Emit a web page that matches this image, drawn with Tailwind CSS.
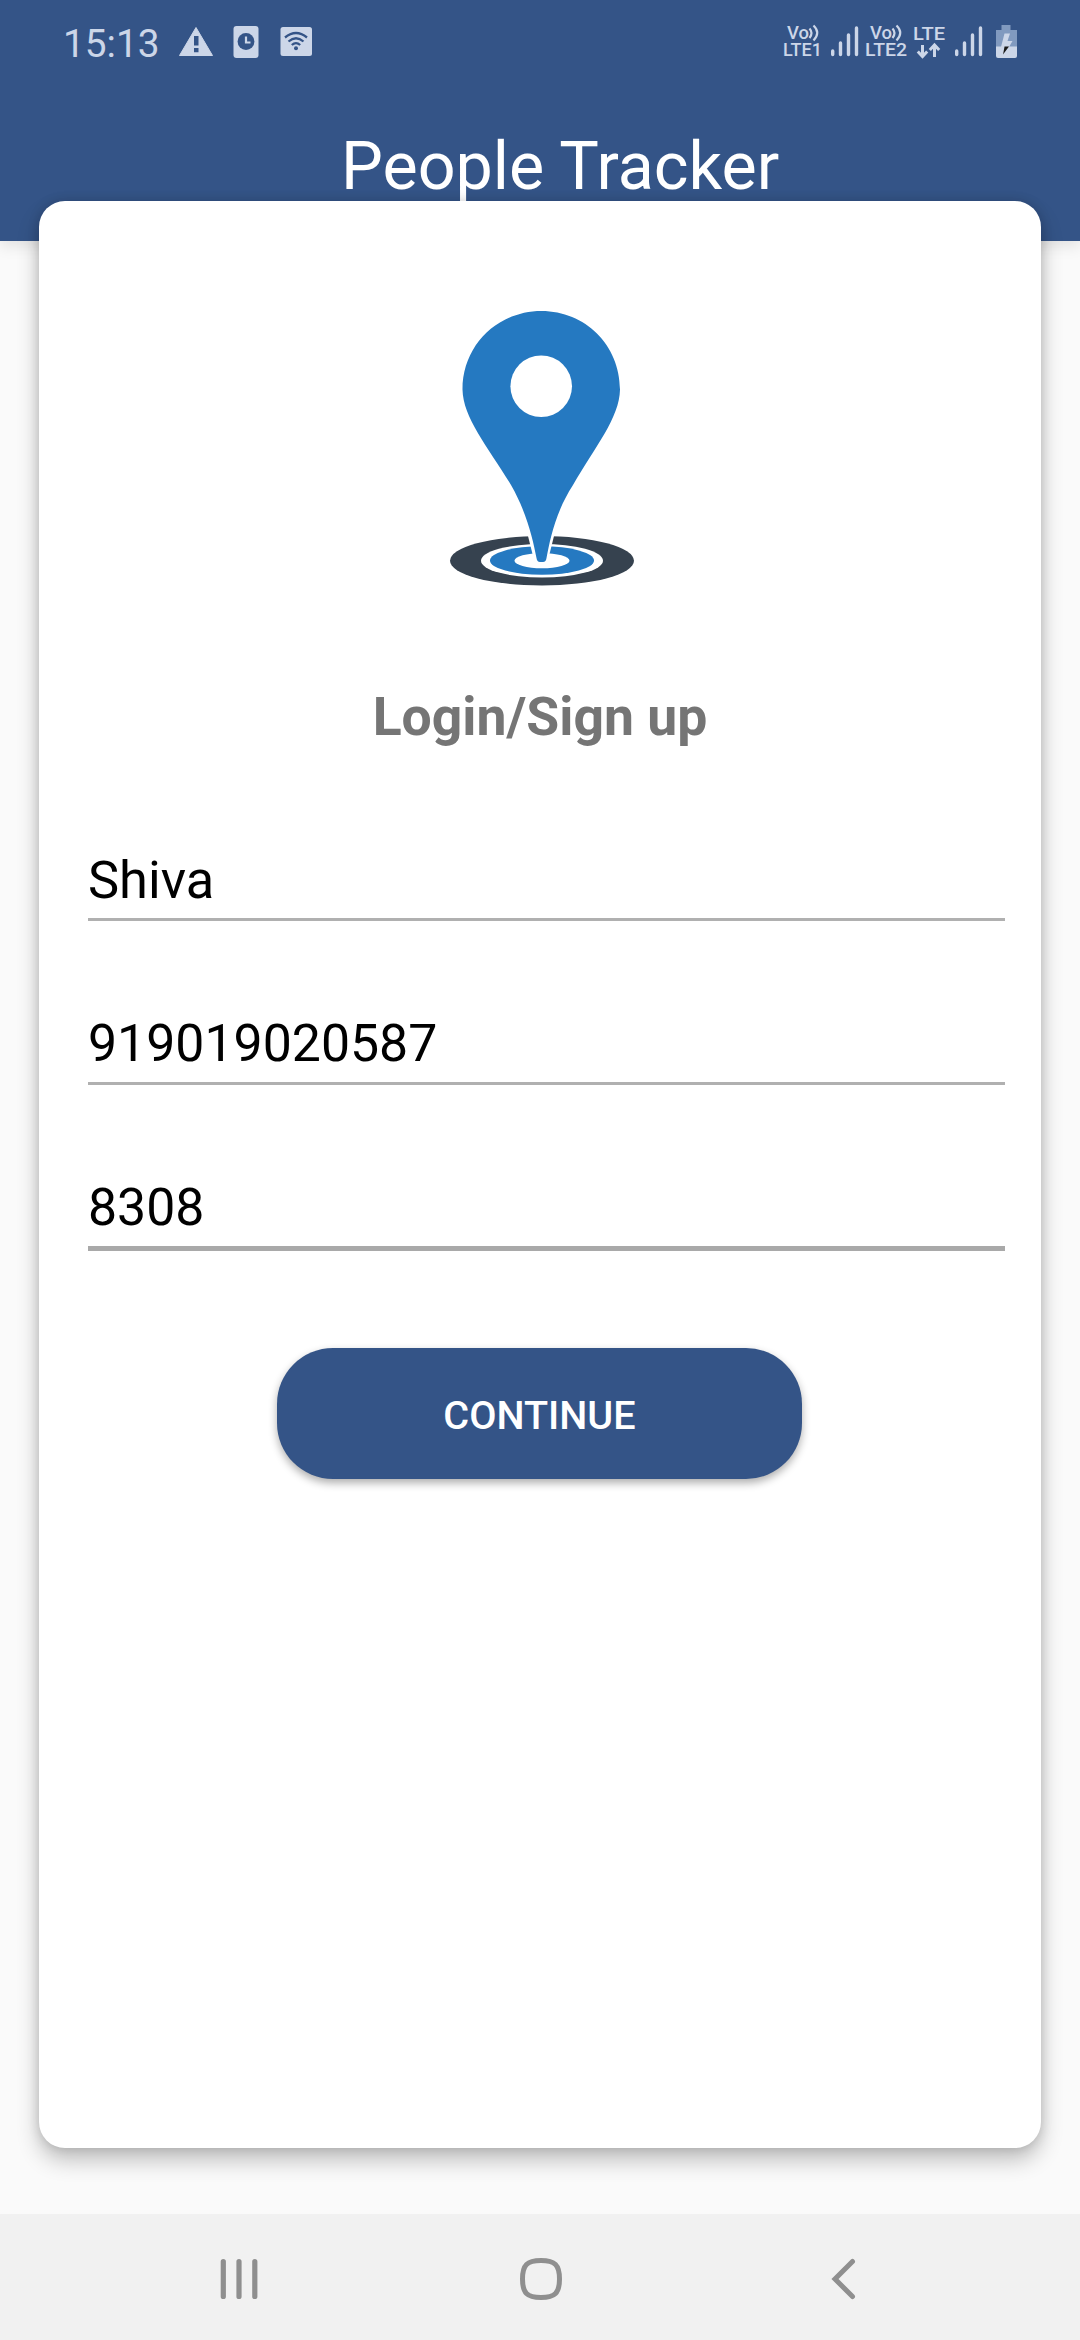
<!DOCTYPE html>
<html lang="en">
<head>
<meta charset="utf-8">
<title>People Tracker</title>
<script src="https://cdn.jsdelivr.net/npm/@tailwindcss/browser@4"></script>
</head>
<body class="flex h-[2340px] w-[1080px] flex-col overflow-hidden bg-[#fafafa] font-[Roboto,sans-serif]">
  <header class="h-[241px] shrink-0 bg-[#345487] shadow-[0_5px_14px_rgba(0,0,0,0.10)]">
    <!-- Status bar -->
    <div class="flex h-[84px] items-start justify-between pr-[60px] pl-[63px] text-[#ccd6e8]">
      <div class="flex">
        <span class="mt-[20px] w-[111px] text-[38.8px] leading-[48px]">15:13</span>
        <svg class="mt-[20px] h-[44px] w-[140px]" viewBox="174 20 140 44" fill="currentColor">
          <path d="M196 27.5 212.500 55.500H179.500Z" stroke="currentColor" stroke-width="1" stroke-linejoin="round"/>
          <path d="M194 36h4.500v9.500H194zM194 48h4.500v4.300H194z" fill="#345487"/>
          <rect x="233.500" y="26" width="25" height="32" rx="3"/>
          <circle cx="246" cy="41.500" r="8.400" fill="#345487"/>
          <path d="M246 36.500V42.500H250.500" fill="none" stroke="currentColor" stroke-width="2.200"/>
          <rect x="280.500" y="27" width="31.500" height="29" rx="2.500"/>
          <g fill="none" stroke="#345487" stroke-width="2.300">
            <path d="M285 37.500Q296 28.500 307 37.500M288.500 41.500Q296 35 303.500 41.500M291.800 45Q296 41.300 300.200 45"/>
          </g>
          <circle cx="296" cy="48.300" r="2" fill="#345487"/>
        </svg>
      </div>
      <svg class="mt-[20px] h-[44px] w-[240px] font-medium" viewBox="780 20 240 44" fill="currentColor" font-size="19">
        <g fill="currentColor" stroke="none">
          <text x="787" y="39" textLength="22" lengthAdjust="spacingAndGlyphs" font-size="18">Vo</text>
          <text x="783" y="56" textLength="39" lengthAdjust="spacingAndGlyphs">LTE1</text>
          <text x="870" y="39" textLength="22" lengthAdjust="spacingAndGlyphs" font-size="18">Vo</text>
          <text x="865" y="56" textLength="42" lengthAdjust="spacingAndGlyphs">LTE2</text>
          <text x="913" y="40" textLength="32" lengthAdjust="spacingAndGlyphs">LTE</text>
        </g>
        <g fill="none" stroke="currentColor" stroke-width="2.200">
          <path d="M809.500 28.500Q813.500 33 809.500 38M813.500 25.500Q821 32.500 813.500 40.500"/>
          <path d="M892.500 28.500Q896.500 33 892.500 38M896.500 25.500Q904 32.500 896.500 40.500"/>
        </g>
        <g fill="none" stroke="currentColor" stroke-width="3.400" stroke-linecap="round">
          <path d="M832.700 51v3.500M840.500 43v11.500M848.500 35v19.500M856.500 28v26.500"/>
          <path d="M956.700 51v3.500M964.500 43v11.500M972.500 35v19.500M980.500 28v26.500"/>
        </g>
        <path d="M922.500 45v11M917.800 51.500l4.700 5 4.700-5M934.500 57V46M929.800 50l4.700-5 4.700 5" fill="none" stroke="currentColor" stroke-width="3"/>
        <path d="M1001.500 25h9v5h6.500v17h-21V30h5.500z" fill="#819abf"/>
        <path d="M996 46.500h21V56q0 2-2 2h-17q-2 0-2-2z"/>
        <path d="M1004.500 33.500h5.500l-2.500 7.500h5l-3.500 6h-8z"/>
        <path d="M1004.500 46.500h4.500l-6 8z" fill="#1a1a1a"/>
      </svg>
    </div>
    <h1 class="pt-[42px] pl-[341px] text-[66.4px] leading-[80px] whitespace-nowrap text-white">People Tracker</h1>
  </header>

  <main class="relative -mt-[40px] mr-[39px] ml-[39px] flex h-[1947px] shrink-0 flex-col rounded-[26px] bg-white shadow-[0_12px_22px_rgba(0,0,0,0.24),0_0_12px_rgba(0,0,0,0.15)]">
    <svg class="mt-[99px] ml-[391px] h-[300px] w-[230px] shrink-0" viewBox="430 300 230 300">
      <ellipse cx="542" cy="560.700" rx="92" ry="24.700" fill="#36424f"/>
      <ellipse cx="542" cy="560.700" rx="61" ry="16.800" fill="#fff"/>
      <ellipse cx="542" cy="560.500" rx="52" ry="14.300" fill="#2579c1"/>
      <ellipse cx="542" cy="560.700" rx="27.500" ry="7.600" fill="#fff"/>
      <path d="M526.500 530 534 560H548L555.500 530Z" fill="#fff"/>
      <path fill="#2579c1" d="M541.500 311C498 311 462.500 345 462.500 389.500C463 418 488 447 511 485C527 513 533 540 536.500 558Q537 562 540 562H543Q546 562 546.500 558C550 540 555 513 573 485C595 447 619.500 418 620 389.500C620 345 585 311 541.500 311Z"/>
      <circle cx="541.200" cy="386.200" r="30.800" fill="#fff"/>
    </svg>
    <h2 class="mt-[87px] text-center text-[53.5px] leading-[60px] font-bold text-[#757575]">Login/Sign up</h2>
    <form class="mt-[93px] mr-[36px] ml-[49px] flex flex-col">
      <div class="flex h-[81px] flex-col justify-end border-b-[3px] border-[#b0b0b0] text-[52.4px] leading-[76px] text-black">Shiva</div>
      <div class="mt-[83px] flex h-[81px] flex-col justify-end border-b-[3px] border-[#b0b0b0] text-[51.8px] leading-[76px] text-black">919019020587</div>
      <div class="mt-[83px] flex h-[83px] flex-col justify-end border-b-[5px] border-[#a9a9a9] text-[51.8px] leading-[76px] text-black">8308</div>
      <button type="button" class="mt-[97px] ml-[189px] h-[131px] w-[525px] rounded-[56px] bg-[#345487] pt-[4px] text-[39.6px] leading-[48px] font-medium text-white shadow-[0_4px_8px_rgba(0,0,0,0.32)]">CONTINUE</button>
    </form>
  </main>

  <!-- System navigation -->
  <nav class="mt-auto flex h-[126px] shrink-0 items-center bg-[#f1f1f1] pt-[4px] text-[#8f8f8f]">
    <svg class="ml-[214px] h-[50px] w-[50px]" viewBox="0 0 50 50" fill="none" stroke="currentColor" stroke-width="5.200" stroke-linecap="round"><path d="M9.300 7.500v35M25 7.500v35M40.800 7.500v35"/></svg>
    <svg class="ml-[252px] h-[50px] w-[50px]" viewBox="0 0 50 50" fill="none" stroke="currentColor" stroke-width="5"><path d="M25 6.500C39 6.500 43.500 11 43.500 25S39 43.500 25 43.500S6.500 39 6.500 25S11 6.500 25 6.500Z"/></svg>
    <svg class="ml-[253px] h-[50px] w-[50px]" viewBox="0 0 50 50" fill="none" stroke="currentColor" stroke-width="5" stroke-linecap="round"><path d="M33.500 7.500 16 25 33.500 42.500"/></svg>
  </nav>
</body>
</html>
